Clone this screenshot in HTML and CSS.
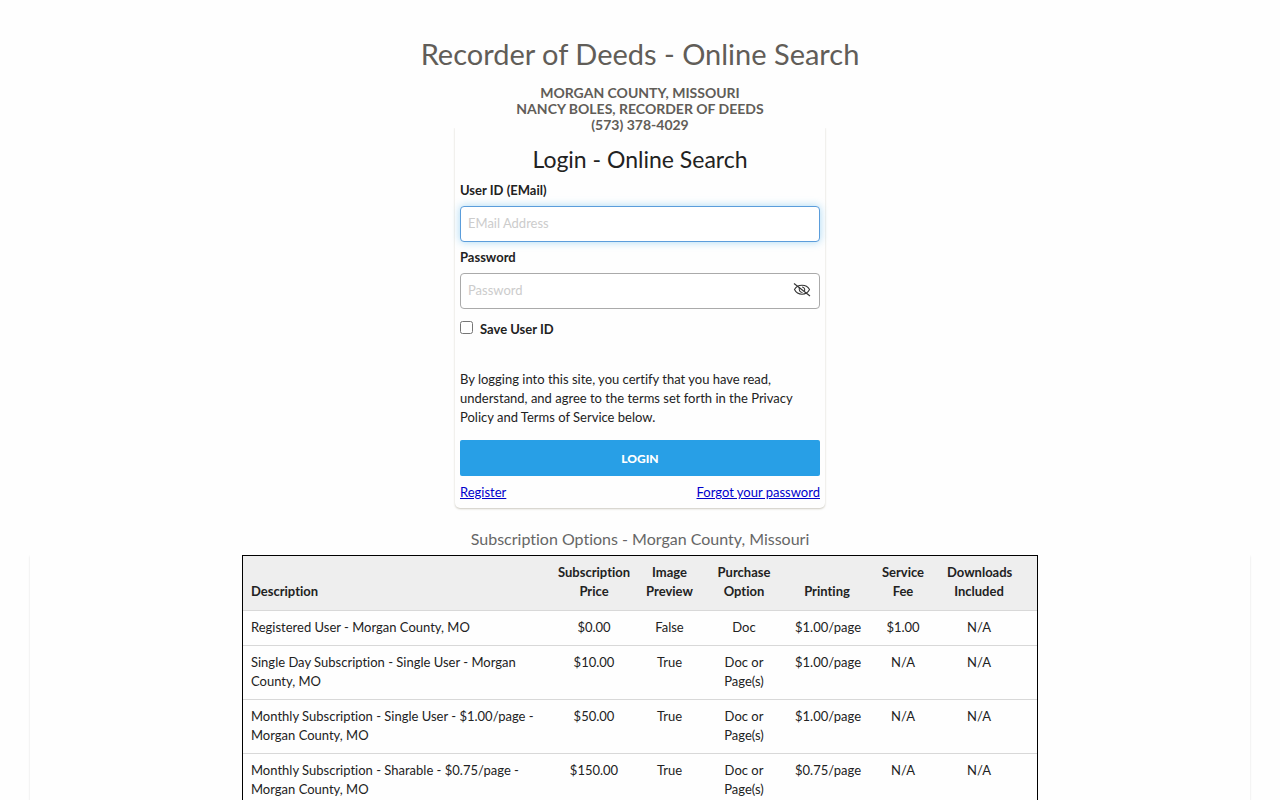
FILE: index.html
```
<!DOCTYPE html>
<html lang="en">
<head>
    <meta charset="UTF-8">
    <meta name="viewport" content="width=device-width, initial-scale=1.0">
    <title>Recorder of Deeds - Online Search</title>
    <link rel="stylesheet" href="styles.css">
</head>
<body>
    <header class="header">
        <h1 class="title">Recorder of Deeds - Online Search</h1>
        <h2 class="county">MORGAN COUNTY, MISSOURI<br>NANCY BOLES, RECORDER OF DEEDS<br>(573) 378-4029</h2>
    </header>

    <main>
        <form class="login">
            <h2 class="login-title">Login - Online Search</h2>
            <label class="label" for="email">User ID (EMail)</label>
            <input class="input" id="email" type="email" placeholder="EMail Address" autofocus>
            <label class="label" for="password">Password</label>
            <div class="password">
                <input class="input" id="password" type="password" placeholder="Password">
                <button class="toggle" type="button" aria-label="Show password">
                    <svg width="18" height="16" viewBox="0 0 18 16" fill="none" stroke="#333" stroke-width="1.1">
                        <path d="M1.5 7.500C3 4.800 5.500 3.300 9 3.300S15 4.800 16.500 7.500C15 10.500 12.500 12.200 9 12.200S3 10.500 1.500 7.500Z"/>
                        <path d="M6.500 5.500C5.500 8 7 10.500 9.500 10.500M9 5C11 5 12.200 7 11.500 9"/>
                        <path d="M1 1.500L17 14"/>
                    </svg>
                </button>
            </div>
            <div class="save">
                <input class="check" id="save" type="checkbox">
                <label for="save">Save User ID</label>
            </div>
            <p class="terms">By logging into this site, you certify that you have read, understand, and agree to the terms set forth in the Privacy Policy and Terms of Service below.</p>
            <button class="submit" type="submit">LOGIN</button>
            <div class="links">
                <a href="#">Register</a>
                <a href="#">Forgot your password</a>
            </div>
        </form>

        <h3 class="options-title">Subscription Options - Morgan County, Missouri</h3>
        <section class="options">
            <table class="table">
                <colgroup>
                    <col>
                    <col class="col-price">
                    <col class="col-preview">
                    <col class="col-purchase">
                    <col class="col-printing">
                    <col class="col-fee">
                    <col class="col-downloads">
                    <col class="col-action">
                </colgroup>
                <thead>
                    <tr>
                        <th>Description</th>
                        <th>Subscription Price</th>
                        <th>Image Preview</th>
                        <th>Purchase Option</th>
                        <th>Printing</th>
                        <th>Service Fee</th>
                        <th>Downloads Included</th>
                        <th></th>
                    </tr>
                </thead>
                <tbody>
                    <tr>
                        <td>Registered User - Morgan County, MO</td>
                        <td>$0.00</td>
                        <td>False</td>
                        <td>Doc</td>
                        <td>$1.00/page</td>
                        <td>$1.00</td>
                        <td>N/A</td>
                        <td></td>
                    </tr>
                    <tr>
                        <td>Single Day Subscription - Single User - Morgan County, MO</td>
                        <td>$10.00</td>
                        <td>True</td>
                        <td>Doc or Page(s)</td>
                        <td>$1.00/page</td>
                        <td>N/A</td>
                        <td>N/A</td>
                        <td></td>
                    </tr>
                    <tr>
                        <td>Monthly Subscription - Single User - $1.00/page - Morgan County, MO</td>
                        <td>$50.00</td>
                        <td>True</td>
                        <td>Doc or Page(s)</td>
                        <td>$1.00/page</td>
                        <td>N/A</td>
                        <td>N/A</td>
                        <td></td>
                    </tr>
                    <tr>
                        <td>Monthly Subscription - Sharable - $0.75/page - Morgan County, MO</td>
                        <td>$150.00</td>
                        <td>True</td>
                        <td>Doc or Page(s)</td>
                        <td>$0.75/page</td>
                        <td>N/A</td>
                        <td>N/A</td>
                        <td></td>
                    </tr>
                </tbody>
            </table>
        </section>
    </main>
</body>
</html>
```
FILE: styles.css
```
* {
    box-sizing: border-box;
}

html {
    scrollbar-width: none;
}

body {
    margin: 0;
    background-color: #fefefe;
    color: #222;
    font-family: "Lato", sans-serif;
    font-size: 13px;
    font-variant-ligatures: none;
    line-height: 19px;
}

.header {
    padding-top: 36px;
    text-align: center;
    color: #615d58;
}

.title {
    margin: 0 0 13px;
    font-size: 29px;
    font-weight: 400;
    line-height: 36px;
}

.county {
    margin: 0;
    font-size: 14px;
    line-height: 16px;
}

.login {
    display: flex;
    flex-direction: column;
    max-width: 370px;
    margin: -9px auto 0;
    padding: 21px 5px 6px;
    border-radius: 5px;
    box-shadow: 0 1px 2px rgba(90, 80, 50, 0.3);
    clip-path: inset(4px -4px -4px);
}

.login-title {
    margin: 0 0 7px;
    font-size: 23px;
    font-weight: 400;
    line-height: 29px;
    text-align: center;
}

.label {
    margin-bottom: 6px;
    font-weight: 700;
}

.input {
    width: 100%;
    height: 36px;
    margin-bottom: 6px;
    padding: 0 7px 2px;
    border: 1px solid #aaa;
    border-radius: 4px;
    background-color: #fff;
    color: #222;
    font-family: inherit;
    font-size: 13px;
}

.input::placeholder {
    color: #ccc;
}

.input:focus {
    border-color: #5b9ddb;
    box-shadow: 0 0 8px rgba(40, 160, 230, 0.4);
    outline: none;
}

.password {
    position: relative;
}

.toggle {
    position: absolute;
    top: 9px;
    right: 9px;
    display: flex;
    padding: 0;
    border: 0;
    background: none;
    cursor: pointer;
}

.save {
    display: flex;
    gap: 7px;
    margin-top: 5px;
    font-weight: 700;
}

.check {
    width: 13px;
    height: 13px;
    margin: 1px 0;
}

.terms {
    margin: 31px 0 13px;
}

.submit {
    height: 36px;
    border: 0;
    border-radius: 2px;
    background-color: #289fe6;
    color: #fff;
    font-family: inherit;
    font-size: 12px;
    font-weight: 900;
    cursor: pointer;
}

.links {
    display: flex;
    justify-content: space-between;
    margin-top: 7px;
}

.links a {
    color: #0000cc;
}

.options-title {
    margin: 21px 0 7px;
    color: #666;
    font-size: 16px;
    font-weight: 400;
    line-height: 19px;
    text-align: center;
}

.options {
    margin: 0 30px;
    box-shadow: 0 1px 2px rgba(0, 0, 0, 0.12);
    clip-path: inset(0 -4px -4px);
}

.table {
    width: 796px;
    max-width: 100%;
    margin: 0 auto;
    border: 1px solid #000;
    border-spacing: 0;
    table-layout: fixed;
}

.table th,
.table td {
    padding: 7px 8px 8px;
    border-bottom: 1px solid #d8d8d8;
    text-align: center;
    vertical-align: top;
}

.table th {
    padding-bottom: 9px;
    background-color: #eee;
    vertical-align: bottom;
}

.table th:first-child,
.table td:first-child {
    text-align: left;
}

.col-price {
    width: 88px;
}

.col-preview {
    width: 63px;
}

.col-purchase {
    width: 86px;
}

.col-printing {
    width: 80px;
}

.col-fee {
    width: 72px;
}

.col-downloads {
    width: 80px;
}

.col-action {
    width: 18px;
}
```
